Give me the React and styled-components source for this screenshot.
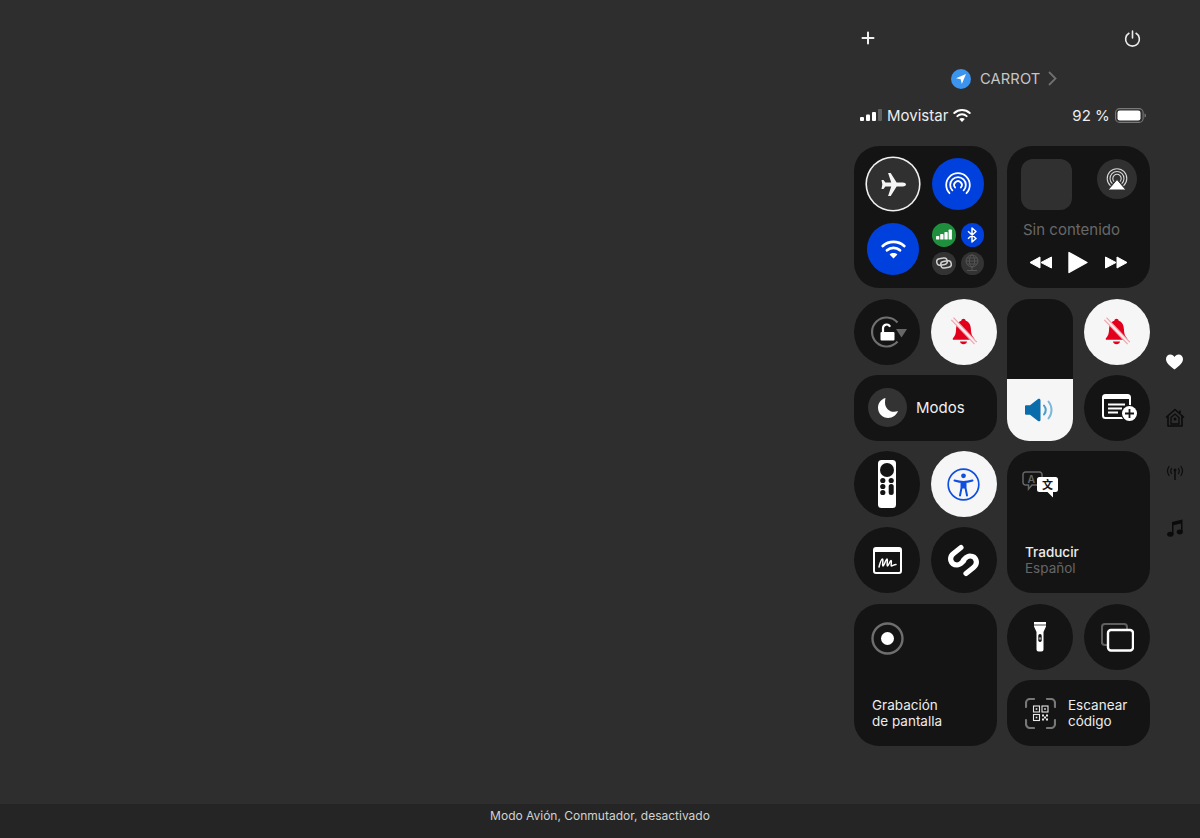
import React from "react";
import styled, { createGlobalStyle } from "styled-components";

const Global = createGlobalStyle`
  html, body { margin: 0; padding: 0; height: 100%; background: #2e2e2e; }
  #root { height: 100%; }
  * { box-sizing: border-box; }
  body { font-family: Inter, "Noto Sans", "Liberation Sans", sans-serif; -webkit-font-smoothing: antialiased; }
`;

const Page = styled.div`
  width: 1200px; height: 838px; display: flex; flex-direction: column; overflow: hidden;
  background: #2e2e2e;
`;
const Stage = styled.main`
  flex: 1; display: flex; justify-content: flex-end; align-items: flex-start; min-height: 0;
`;
const Panel = styled.section`
  width: 295.75px; display: flex; flex-direction: column; padding-top: 26px;
`;
const TopRow = styled.div`
  height: 24px; display: flex; justify-content: space-between; align-items: center; padding: 0 9px 0 7px;
`;
const LocationRow = styled.div`
  height: 24px; margin-top: 16px; display: flex; align-items: center; padding-left: 97px; gap: 9px; padding-top: 1px;
  color: #c6c6c6; font-size: 14.7px; letter-spacing: 0.1px;
`;
const LocDot = styled.span`
  width: 20px; height: 20px; border-radius: 50%; background: #3b94ee; display: flex; align-items: center; justify-content: center;
`;
const LocChevron = styled.span` display: flex; margin-left: -1px; `;
const StatusRow = styled.div`
  height: 20px; margin-top: 15px; display: flex; align-items: center; padding: 0 4px 0 6px; color: #ededed; font-size: 15px;
`;
const StatusGroup = styled.div`
  display: flex; align-items: center; gap: ${p => p.$gap || 5}px;
`;
const Spacer = styled.div` flex: 1; `;
const Grid = styled.div`
  margin-top: 21px; display: grid;
  grid-template-columns: repeat(4, 66.25px); grid-auto-rows: 66px; column-gap: 10.25px; row-gap: 10.3px;
`;
const Tile = styled.div`
  grid-column: span ${p => p.$w || 1}; grid-row: span ${p => p.$h || 1};
  background: ${p => p.$light ? "#f6f6f6" : "#141414"};
  border-radius: ${p => (p.$w || p.$h) ? "25px" : "50%"};
  display: flex; align-items: center; justify-content: center; position: relative; overflow: hidden;
`;
const ConnTile = styled(Tile)`
  display: grid; grid-template-columns: 52px 52px; grid-template-rows: 52px 52px; gap: 13px;
  padding: 12px 13px; justify-content: start; align-content: start;
`;
const Round = styled.div`
  width: 52px; height: 52px; border-radius: 50%; background: ${p => p.$bg || "#0040dd"};
  display: flex; align-items: center; justify-content: center;
  ${p => p.$ring ? "box-shadow: 0 0 0 1.6px #f2f2f2; background:#303030;" : ""}
`;
const MiniGrid = styled.div`
  display: grid; grid-template-columns: 23.5px 23.5px; grid-template-rows: 23.5px 23.5px; gap: 5px; width: 52px; height: 52px;
`;
const Mini = styled.div`
  border-radius: 50%; background: ${p => p.$bg}; display: flex; align-items: center; justify-content: center;
`;
const MediaTile = styled(Tile)`
  display: flex; flex-direction: column; align-items: stretch; justify-content: flex-start; padding: 13px 14px 0 14px;
`;
const MediaTop = styled.div` display: flex; justify-content: space-between; align-items: flex-start; `;
const Artwork = styled.div` width: 51px; height: 51px; border-radius: 12px; background: #303030; `;
const AirCircle = styled.div`
  width: 40px; height: 40px; border-radius: 50%; background: #303030; display: flex; align-items: center; justify-content: center; margin-right: -1px;
`;
const NoContent = styled.div`
  color: #686868; font-size: 15px; margin: 11px 0 0 2px; line-height: 18px;
`;
const Controls = styled.div`
  display: flex; align-items: center; justify-content: space-between; margin: 12px 8px 0 8px;
`;
const VolumeTile = styled(Tile)`
  display: flex; flex-direction: column; justify-content: flex-end; align-items: stretch; border-radius: 22px;
`;
const VolumeFill = styled.div`
  height: 62px; background: #f6f6f6; display: flex; align-items: center; justify-content: center;
`;
const ModesTile = styled(Tile)`
  justify-content: flex-start; padding-left: 14px; gap: 9px; color: #f0f0f0; font-size: 15px; font-weight: 400; border-radius: 24px;
`;
const MoonCircle = styled.div`
  width: 39px; height: 39px; border-radius: 50%; background: #333; display: flex; align-items: center; justify-content: center;
`;
const WideTile = styled(Tile)`
  display: flex; flex-direction: column; align-items: flex-start; justify-content: space-between;
  padding: ${p => p.$pad};
`;
const TileLabel = styled.div`
  font-size: 13.5px; line-height: 16px; font-weight: ${p => p.$strong ? 500 : 400}; color: ${p => p.$dim ? "#666" : "#ececec"};
`;
const TranslateMark = styled.div` margin-left: -3px; display: flex; `;
const RecordMark = styled.div` margin-left: -1px; display: flex; `;
const ScanTile = styled(Tile)`
  justify-content: flex-start; padding-left: 18px; gap: 12px; border-radius: 24px;
`;
const NudgeRight = styled.div` margin-left: 6px; display: flex; `;
const Side = styled.aside`
  width: 50.25px; height: 540px; padding-top: 350px; display: flex; flex-direction: column; align-items: center; gap: 32px;
`;
const SideItem = styled.div` height: 24px; display: flex; align-items: center; justify-content: center; `;
const Bottom = styled.footer`
  height: 34px; background: #252525; display: flex; align-items: flex-start; justify-content: center; padding-top: 3px;
  color: #d2d2d2; font-size: 12px; line-height: 17px;
`;

const arc = (cx, cy, r, gap = 40) => {
  const a = (gap * Math.PI) / 180;
  const dx = r * Math.sin(a), dy = r * Math.cos(a);
  return `M${cx - dx} ${cy + dy}A${r} ${r} 0 1 1 ${cx + dx} ${cy + dy}`;
};

const Plane = () => (
  <svg width="25" height="23" viewBox="0 0 24 22" fill="#f4f4f4">
    <path d="M24 11c0 1.2-1.5 1.9-3 1.9h-6L9.3 22H6.8l3-9.1H4.2L2.4 15.4H.5L1.3 11 .5 6.6h1.9l1.8 2.500h5.6L6.800 0h2.500L15 9.100h6c1.500 0 3 .7 3 1.900z" />
  </svg>
);
const AirDrop = () => (
  <svg width="26" height="24" viewBox="0 0 26 24" fill="none" stroke="#fff" strokeWidth="1.8" strokeLinecap="round">
    <path d={arc(13, 13, 11.8, 46)} />
    <path d={arc(13, 13, 7.8, 46)} />
    <path d={arc(13, 13, 3.8, 50)} />
  </svg>
);
const Wifi = ({ w = 25, color = "#fff" }) => (
  <svg width={w} height={w * 0.8} viewBox="0 0 25 20" fill="none">
    <path d="M1.800 7C7.800 1.500 17.200 1.500 23.200 7" stroke={color} strokeWidth="2.800" strokeLinecap="round" />
    <path d="M6 11.300C9.600 8 15.400 8 19 11.300" stroke={color} strokeWidth="2.800" strokeLinecap="round" />
    <path d="M12.500 19.500 8.600 15.400c2.200-1.900 5.600-1.900 7.800 0z" fill={color} />
  </svg>
);
const Cell = () => (
  <svg width="16" height="11" viewBox="0 0 16 11" fill="#fff">
    <rect x="0" y="7" width="3.300" height="3.600" rx=".7" />
    <rect x="4.200" y="5" width="3.300" height="5.600" rx=".7" />
    <rect x="8.400" y="3" width="3.300" height="7.600" rx=".7" />
    <rect x="12.600" y=".6" width="3.300" height="10" rx=".7" />
  </svg>
);
const Bluetooth = () => (
  <svg width="10" height="16" viewBox="0 0 10 16" fill="none" stroke="#fff" strokeWidth="1.500" strokeLinejoin="round">
    <path d="M1 4.200 9 11.500 5 15V1l4 3.500-8 7.300" />
  </svg>
);
const Chain = () => (
  <svg width="16" height="14" viewBox="0 0 16 14" fill="none" stroke="#d0d0d0" strokeWidth="1.500">
    <g transform="rotate(-10 8 7)">
      <rect x="1" y="2" width="10.500" height="6.500" rx="3" />
      <rect x="4.500" y="5.500" width="10.500" height="6.500" rx="3" />
    </g>
  </svg>
);
const Globe = () => (
  <svg width="16" height="18" viewBox="0 0 16 18" fill="none" stroke="#575757" strokeWidth="0.9">
    <circle cx="8" cy="7" r="6" />
    <ellipse cx="8" cy="7" rx="2.600" ry="6" />
    <path d="M2 7h12M3 4h10M3 10h10M8 13v3M3 16.500h10" />
  </svg>
);
const AirPlayGlyph = () => (
  <svg width="22" height="23" viewBox="0 0 22 23">
    <g fill="none" stroke="#d8d8d8" strokeWidth="1.100">
      <path d={arc(11, 10.5, 9.8, 42)} />
      <path d={arc(11, 10.5, 7, 42)} />
      <path d={arc(11, 10.5, 4.2, 42)} />
    </g>
    <path d="M11 11.500 20 22H2z" fill="#fff" stroke="#303030" strokeWidth="1" />
  </svg>
);
const Rewind = ({ flip }) => (
  <svg width="23" height="13" viewBox="0 0 23 13" fill="#fff" style={flip ? { transform: "scaleX(-1)" } : undefined}>
    <path d="M11 1v11L1 6.500zM22.500 1v11l-10.500-5.500z" stroke="#fff" strokeWidth="1" strokeLinejoin="round" />
  </svg>
);
const Play = () => (
  <svg width="20" height="23" viewBox="0 0 20 23" fill="#fff">
    <path d="M1 1.500v20L19 11.500z" stroke="#fff" strokeWidth="1.400" strokeLinejoin="round" />
  </svg>
);
const RotationLock = () => (
  <svg width="39" height="32" viewBox="0 0 39 32" fill="none">
    <path d="M29.500 6.500A14.500 14.500 0 1 0 29.500 25.500" stroke="#707070" strokeWidth="2.200" />
    <path d="M28 13h11l-5.500 8.500z" fill="#666" />
    <rect x="12.500" y="16" width="14" height="8.500" rx="1" fill="#fff" />
    <path d="M15 16.500V12a3.700 3.700 0 0 1 7.100-1.200" stroke="#fff" strokeWidth="2.200" />
  </svg>
);
const BellOff = () => (
  <svg width="31" height="31" viewBox="0 0 28 28">
    <path d="M14 2.500c-1.100 0-1.900.8-2 1.800C8.700 5.300 7.400 8.600 7.300 12c-.1 4.200-1 6.300-2.800 8-.5.500-.3 1.500.6 1.500h17.800c.9 0 1.100-1 .6-1.500-1.800-1.700-2.700-3.800-2.800-8-.1-3.400-1.400-6.700-4.700-7.700C15.900 3.300 15.100 2.500 14 2.500z" fill="#e2001c" />
    <path d="M10.800 23a3.300 3.300 0 0 0 6.400 0z" fill="#e2001c" />
    <path d="M4 2.500 25 24.500" stroke="#fbeef0" strokeWidth="3" />
    <path d="M3 3.500 24 25.500" stroke="#eda3ab" strokeWidth="1" />
    <path d="M5 1.500 26 23.500" stroke="#eda3ab" strokeWidth="1" />
  </svg>
);
const Speaker = () => (
  <svg width="32" height="24" viewBox="0 0 32 24" fill="none">
    <path d="M1 8.500c0-.8.500-1.300 1.300-1.300H6L14 1c1-.8 2.500-.2 2.500 1.300v19.400c0 1.500-1.500 2.100-2.500 1.300L6 16.800H2.300c-.8 0-1.300-.5-1.300-1.300z" fill="#0a6cab" />
    <path d="M20 7.500c2.200 2.800 2.200 6.200 0 9" stroke="#4d9ccc" strokeWidth="2" strokeLinecap="round" />
    <path d="M24.500 3.500c4 5 4 12 0 17" stroke="#7db7da" strokeWidth="2" strokeLinecap="round" />
  </svg>
);
const NoteAdd = () => (
  <svg width="36" height="28" viewBox="0 0 36 28" fill="none">
    <rect x="1" y="1" width="27" height="23" rx="2.500" stroke="#fff" strokeWidth="2" />
    <path d="M1 3.500a2.500 2.500 0 0 1 2.500-2.500h22a2.500 2.500 0 0 1 2.500 2.500V5H1z" fill="#fff" />
    <path d="M6 10.500h17M6 14.500h14M6 18.500h10" stroke="#fff" strokeWidth="1.800" />
    <circle cx="27.500" cy="19.500" r="8.500" fill="#141414" />
    <circle cx="27.500" cy="19.500" r="7.500" fill="#fff" />
    <path d="M27.500 15v9M23 19.500h9" stroke="#141414" strokeWidth="1.800" />
  </svg>
);
const Remote = () => (
  <svg width="18" height="48" viewBox="0 0 18 48">
    <rect width="18" height="48" rx="3.500" fill="#fff" />
    <circle cx="9" cy="10" r="7" fill="#141414" />
    <circle cx="4.800" cy="20.500" r="2.600" fill="#141414" />
    <circle cx="13.200" cy="20.500" r="2.600" fill="#141414" />
    <circle cx="4.800" cy="26.500" r="2.600" fill="#141414" />
    <circle cx="4.800" cy="32.500" r="2.600" fill="#141414" />
    <rect x="10.700" y="24" width="5" height="11" rx="2.500" fill="#141414" />
  </svg>
);
const Accessibility = () => (
  <svg width="33" height="33" viewBox="0 0 33 33" fill="none" stroke="#0f4fe0">
    <circle cx="16.500" cy="16.500" r="15.300" strokeWidth="1.700" />
    <circle cx="16.500" cy="7.800" r="2.400" fill="#0f4fe0" stroke="none" />
    <path d="M7.500 12.500c3.200 1 6 1.500 9 1.500s5.800-.5 9-1.500" strokeWidth="2" strokeLinecap="round" />
    <path d="M14.500 14v6l-1.500 7.500M18.500 14v6l1.500 7.500" strokeWidth="2" strokeLinecap="round" />
    <path d="M14.500 15v5h4v-5z" fill="#0f4fe0" strokeWidth="1" />
  </svg>
);
const Scribble = () => (
  <svg width="29" height="27" viewBox="0 0 29 27" fill="none" stroke="#fff">
    <rect x="1" y="1" width="27" height="25" rx="2" strokeWidth="2" />
    <path d="M1 3a2 2 0 0 1 2-2h23a2 2 0 0 1 2 2v2H1z" fill="#fff" strokeWidth="0" />
    <path d="M6 20c1-4 2.500-8 3.500-8s-.5 7 .5 7 3-7 4-7-.5 7 .5 7 2.500-5.500 3.500-5.500-.5 5.500 .5 5.500 2.500-1.500 4.500-1.500" strokeWidth="1.500" strokeLinecap="round" />
  </svg>
);
const Shazam = () => (
  <svg width="31" height="33" viewBox="0 0 31 33" fill="none" stroke="#fff" strokeWidth="5.200" strokeLinecap="round" strokeLinejoin="round">
    <path d="M13 3.500 5.500 9.500C.5 13.500 2.500 21 9 21c2.500 0 4-1.500 5.500-3l1-1" />
    <path d="M18 29.500 25.500 23.500C30.500 19.500 28.500 12 22 12c-2.500 0-4 1.500-5.500 3l-1 1" />
  </svg>
);
const Translate = () => (
  <svg width="36" height="28" viewBox="0 0 36 28" fill="none" fontFamily="Inter, sans-serif">
    <path d="M3.500 1h14a2.500 2.500 0 0 1 2.500 2.500v8a2.500 2.500 0 0 1-2.500 2.500H10l-3.500 4v-4h-3A2.500 2.500 0 0 1 1 11.500v-8A2.500 2.500 0 0 1 3.500 1z" stroke="#666" strokeWidth="1.500" />
    <text x="5.500" y="11.500" fontSize="10.500" fontWeight="600" fill="#666">A</text>
    <path d="M17.500 6h16A2.500 2.500 0 0 1 36 8.500v10a2.500 2.500 0 0 1-2.500 2.500H31l0 5.500-5.500-5.500h-8a2.500 2.500 0 0 1-2.500-2.500v-10A2.500 2.500 0 0 1 17.500 6z" fill="#fff" />
    <text x="20" y="18" fontSize="11" fontWeight="700" fill="#141414" fontFamily="'Noto Sans CJK SC', sans-serif">文</text>
  </svg>
);
const RecordIcon = () => (
  <svg width="33" height="33" viewBox="0 0 33 33" fill="none">
    <circle cx="16.500" cy="16.500" r="15" stroke="#6e6e6e" strokeWidth="2.400" />
    <circle cx="16.500" cy="16.500" r="6.500" fill="#fff" />
  </svg>
);
const Flashlight = () => (
  <svg width="14" height="30" viewBox="0 0 14 30">
    <path d="M1 0h12v4.500L10.500 10v17.500A2 2 0 0 1 8.500 29.500h-3a2 2 0 0 1-2-2V10L1 4.500z" fill="#fff" />
    <path d="M1 3h12" stroke="#141414" strokeWidth=".8" />
    <rect x="5.300" y="12" width="3.400" height="8" rx="1.700" fill="#141414" />
    <circle cx="7" cy="16.500" r="1.300" fill="#9a9a9a" />
  </svg>
);
const Windows = () => (
  <svg width="34" height="30" viewBox="0 0 34 30" fill="none">
    <path d="M2 22V5a3 3 0 0 1 3-3h19a3 3 0 0 1 3 3v3" stroke="#5f5f5f" strokeWidth="2" />
    <path d="M2 20a3 3 0 0 0 3 3h3" stroke="#5f5f5f" strokeWidth="2" />
    <rect x="8" y="8" width="25" height="20.500" rx="3" stroke="#fff" strokeWidth="2.400" fill="#141414" />
  </svg>
);
const QrScan = () => (
  <svg width="31" height="31" viewBox="0 0 31 31" fill="none">
    <path d="M1 9V5a4 4 0 0 1 4-4h4M22 1h4a4 4 0 0 1 4 4v4M30 22v4a4 4 0 0 1-4 4h-4M9 30H5a4 4 0 0 1-4-4v-4" stroke="#777" strokeWidth="2.200" strokeLinecap="round" />
    <g stroke="#e8e8e8" strokeWidth="1.100">
      <rect x="8.500" y="8" width="6" height="6" />
      <rect x="17" y="8" width="6" height="6" />
      <rect x="8.500" y="16.500" width="6" height="6" />
    </g>
    <g fill="#e8e8e8">
      <rect x="10.700" y="10.200" width="1.600" height="1.600" />
      <rect x="19.200" y="10.200" width="1.600" height="1.600" />
      <rect x="10.700" y="18.700" width="1.600" height="1.600" />
      <rect x="17" y="16.500" width="2" height="2" />
      <rect x="21" y="16.500" width="2" height="2" />
      <rect x="19" y="18.500" width="2" height="2" />
      <rect x="17" y="20.500" width="2" height="2" />
      <rect x="21" y="20.500" width="2" height="2" />
    </g>
  </svg>
);
const Moon = () => (
  <svg width="22" height="22" viewBox="0 0 22 22">
    <path d="M8.500 1C3.800 2.200 1 6.300 1 10.800 1 16.500 5.500 21 11.200 21c4.500 0 8.300-2.900 9.800-7-1.200.5-2.500.8-3.900.8C12 14.800 8 10.800 8 5.700c0-1.700.2-3.200.5-4.700z" fill="#fff" />
  </svg>
);
const Heart = () => (
  <svg width="17" height="16" viewBox="0 0 18 16"><path d="M9 16C3 11.500 0 8.500 0 4.800 0 2 2.100 0 4.700 0 6.500 0 8.100 1 9 2.600 9.900 1 11.500 0 13.300 0 15.900 0 18 2 18 4.800c0 3.700-3 6.700-9 11.200z" fill="#fff" /></svg>
);
const Home = () => (
  <svg width="20" height="19" viewBox="0 0 20 19" fill="none" stroke="#0b0b0b">
    <path d="M1 9.500 10 1.500l9 8M3 8v10h14V8M15 2.500V5" strokeWidth="1.600" strokeLinejoin="round" />
    <path d="M6 9.500 10 6l4 3.500V16H6z" strokeWidth="1.300" />
    <circle cx="10" cy="11" r="1.500" fill="#0b0b0b" stroke="none" />
  </svg>
);
const Antenna = () => (
  <svg width="18" height="15" viewBox="0 0 18 15" fill="none" stroke="#0d0d0d" strokeWidth="1.200" strokeLinecap="round">
    <path d="M3 1.500c-2 3-2 6 0 9M15 1.500c2 3 2 6 0 9M5.500 3.500c-1 1.700-1 3.300 0 5M12.500 3.500c1 1.700 1 3.300 0 5" />
    <path d="M9 6v8.500" strokeWidth="1.500" />
    <circle cx="9" cy="5" r="1.500" fill="#0d0d0d" stroke="none" />
  </svg>
);
const Music = () => (
  <svg width="16" height="18" viewBox="0 0 16 18" fill="#0b0b0b">
    <path d="M5 3 15.500.5V13h-1.500V4.500L6.500 6.200V15.500H5z" />
    <ellipse cx="3.300" cy="15.300" rx="3.200" ry="2.500" />
    <ellipse cx="12.800" cy="13" rx="3.100" ry="2.400" />
  </svg>
);
const Plus = () => (
  <svg width="14" height="14" viewBox="0 0 14 14" stroke="#f0f0f0" strokeWidth="2" strokeLinecap="round"><path d="M7 1.500v11M1.500 7h11" /></svg>
);
const Power = () => (
  <svg width="17" height="17" viewBox="0 0 18 18" fill="none" stroke="#ececec" strokeWidth="1.700" strokeLinecap="round">
    <path d="M9 1.200v7.300M5.200 3.500a7.300 7.300 0 1 0 7.600 0" />
  </svg>
);
const Arrow = () => (
  <svg width="12" height="12" viewBox="0 0 12 12"><path d="M11 1 1 5.300l4.700 1L6.800 11z" fill="#fff" /></svg>
);
const Chevron = () => (
  <svg width="9" height="15" viewBox="0 0 9 15" fill="none" stroke="#707070" strokeWidth="1.800"><path d="m1 1 6.500 6.500L1 14" /></svg>
);
const Signal = () => (
  <svg width="22" height="12" viewBox="0 0 22 12" fill="#fff">
    <rect x="0" y="8" width="4" height="4" rx="1" />
    <rect x="6" y="5.500" width="4" height="6.500" rx="1" />
    <rect x="12" y="3" width="4" height="9" rx="1" />
    <rect x="18" y="0" width="4" height="12" rx="1" fill="#606060" />
  </svg>
);
const Battery = () => (
  <svg width="31" height="15" viewBox="0 0 31 15" fill="none">
    <rect x=".6" y=".6" width="27.500" height="13.800" rx="4" stroke="#787878" strokeWidth="1.100" />
    <rect x="2.500" y="2.500" width="23" height="10" rx="2.300" fill="#fff" />
    <path d="M29.500 5.500c1 .3 1.500 1 1.500 2s-.5 1.700-1.500 2z" fill="#787878" />
  </svg>
);

export default function App() {
  return (
    <Page>
      <Global />
      <Stage>
        <Panel>
          <TopRow><Plus /><Power /></TopRow>
          <LocationRow>
            <LocDot><Arrow /></LocDot>
            <span>CARROT</span>
            <LocChevron><Chevron /></LocChevron>
          </LocationRow>
          <StatusRow>
            <StatusGroup $gap={5}><Signal /><span>Movistar</span><Wifi w={18} color="#fff" /></StatusGroup>
            <Spacer />
            <StatusGroup $gap={5}><span>92 %</span><Battery /></StatusGroup>
          </StatusRow>
          <Grid>
            <ConnTile $w={2} $h={2}>
              <Round $ring><Plane /></Round>
              <Round><AirDrop /></Round>
              <Round><Wifi w={25} /></Round>
              <MiniGrid>
                <Mini $bg="#1f8f3d"><Cell /></Mini>
                <Mini $bg="#0040dd"><Bluetooth /></Mini>
                <Mini $bg="#333"><Chain /></Mini>
                <Mini $bg="#333"><Globe /></Mini>
              </MiniGrid>
            </ConnTile>
            <MediaTile $w={2} $h={2}>
              <MediaTop>
                <Artwork />
                <AirCircle><AirPlayGlyph /></AirCircle>
              </MediaTop>
              <NoContent>Sin contenido</NoContent>
              <Controls><Rewind /><Play /><Rewind flip /></Controls>
            </MediaTile>
            <Tile><RotationLock /></Tile>
            <Tile $light><BellOff /></Tile>
            <VolumeTile $h={2}><VolumeFill><Speaker /></VolumeFill></VolumeTile>
            <Tile $light><BellOff /></Tile>
            <ModesTile $w={2}><MoonCircle><Moon /></MoonCircle>Modos</ModesTile>
            <Tile><NudgeRight><NoteAdd /></NudgeRight></Tile>
            <Tile><Remote /></Tile>
            <Tile $light><Accessibility /></Tile>
            <WideTile $w={2} $h={2} $pad="20px 18px 17px 18px">
              <TranslateMark><Translate /></TranslateMark>
              <div>
                <TileLabel $strong>Traducir</TileLabel>
                <TileLabel $dim>Español</TileLabel>
              </div>
            </WideTile>
            <Tile><Scribble /></Tile>
            <Tile><Shazam /></Tile>
            <WideTile $w={2} $h={2} $pad="18px 18px 17px 18px">
              <RecordMark><RecordIcon /></RecordMark>
              <div>
                <TileLabel>Grabación</TileLabel>
                <TileLabel>de pantalla</TileLabel>
              </div>
            </WideTile>
            <Tile><Flashlight /></Tile>
            <Tile><Windows /></Tile>
            <ScanTile $w={2}>
              <QrScan />
              <div>
                <TileLabel>Escanear</TileLabel>
                <TileLabel>código</TileLabel>
              </div>
            </ScanTile>
          </Grid>
        </Panel>
        <Side>
          <SideItem><Heart /></SideItem>
          <SideItem><Home /></SideItem>
          <SideItem><Antenna /></SideItem>
          <SideItem><Music /></SideItem>
        </Side>
      </Stage>
      <Bottom>Modo Avión, Conmutador, desactivado</Bottom>
    </Page>
  );
}
